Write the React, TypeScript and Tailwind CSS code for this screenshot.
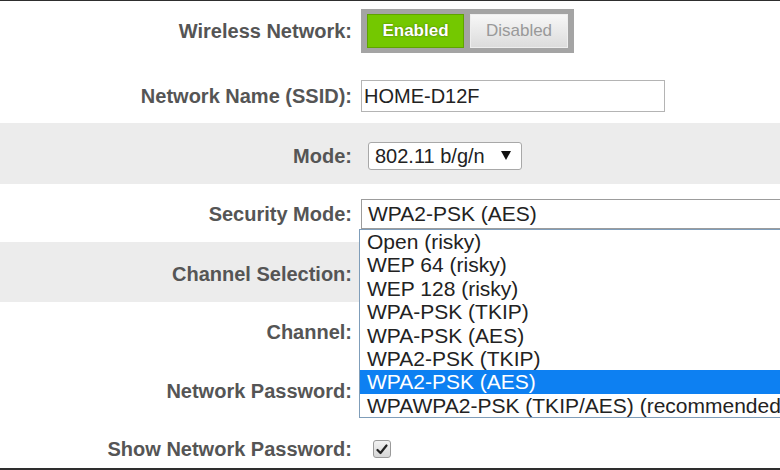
const labelCls =
  "w-[352px] shrink-0 text-right text-[20px] font-bold text-[#555] leading-none";

const securityOptions = [
  "Open (risky)",
  "WEP 64 (risky)",
  "WEP 128 (risky)",
  "WPA-PSK (TKIP)",
  "WPA-PSK (AES)",
  "WPA2-PSK (TKIP)",
  "WPA2-PSK (AES)",
  "WPAWPA2-PSK (TKIP/AES) (recommended)",
];

function Row({
  label,
  shaded = false,
  className = "",
  children,
}: {
  label: string;
  shaded?: boolean;
  className?: string;
  children?: React.ReactNode;
}) {
  return (
    <div
      className={`flex items-center ${shaded ? "bg-[#ececec]" : ""} ${className}`}
    >
      <div className={labelCls}>{label}</div>
      <div className="ml-[9px] flex items-center">{children}</div>
    </div>
  );
}

/** Enabled / Disabled toggle pair */
function Toggle() {
  return (
    <div className="flex gap-[6px] bg-[#a4a4a4] px-[6px] py-[5px] w-[213px] h-[44px]">
      <div className="w-[97px] h-[34px] flex items-center justify-center bg-[#74c800] border border-[#5fa300] text-white text-[17px] font-bold [text-shadow:0_0_2px_rgba(60,90,0,0.9)]">
        Enabled
      </div>
      <div className="w-[98px] h-[34px] flex items-center justify-center bg-gradient-to-b from-[#f7f7f7] to-[#dcdcdc] border border-[#eeeeee] text-[#999] text-[17px]">
        Disabled
      </div>
    </div>
  );
}

function CheckBox() {
  return (
    <div className="ml-[12px] w-[18px] h-[18px] rounded-[3px] border border-[#9a9a9a] bg-gradient-to-b from-[#f2f2f2] to-[#d6d6d6] flex items-center justify-center">
      <svg width="12" height="11" viewBox="0 0 12 11">
        <path
          d="M1.5 6 L4.5 9 L10.5 1.5"
          fill="none"
          stroke="#222"
          strokeWidth="2.2"
          strokeLinecap="round"
          strokeLinejoin="round"
        />
      </svg>
    </div>
  );
}

export default function App() {
  return (
    <div
      className="w-[780px] h-[470px] overflow-hidden bg-white border-t border-b-2 border-[#2e2e2e] flex flex-col"
      style={{ fontFamily: '"Liberation Sans", Arial, sans-serif' }}
    >
      <Row label="Wireless Network:" className="h-[58px] pt-[1px]">
        <Toggle />
      </Row>

      <Row label="Network Name (SSID):" className="h-[64px] pt-[10px]">
        <div className="w-[304px] h-[32px] border border-[#b4b4b4] flex items-center pl-[2px] text-[20px] text-[#222]">
          HOME-D12F
        </div>
      </Row>

      <Row label="Mode:" shaded className="h-[61px] pt-[4px]">
        <div className="ml-[7px] w-[154px] h-[28px] border border-[#a8a8a8] rounded-[3px] bg-white flex items-center pl-[6px] text-[20px] text-[#222]">
          <span>802.11 b/g/n</span>
          <svg className="ml-[16px]" width="10" height="9" viewBox="0 0 10 9">
            <path d="M0 0 H10 L5 9 Z" fill="#111" />
          </svg>
        </div>
      </Row>

      <Row label="Security Mode:" className="h-[58px] pt-[2px] relative z-10">
        <div className="relative">
          <div className="w-[440px] h-[30px] border border-[#9c9c9c] bg-white flex items-center pl-[6px] text-[21px] text-[#222]">
            WPA2-PSK (AES)
          </div>
          {/* open dropdown list */}
          <div className="absolute left-[-2px] top-[30px] w-[450px] border border-[#7f9db9] bg-white">
            {securityOptions.map((o) => (
              <div
                key={o}
                className={`h-[23.4px] flex items-center pl-[7px] text-[21px] whitespace-nowrap ${
                  o === "WPA2-PSK (AES)"
                    ? "bg-[#0d80f2] text-white"
                    : "text-[#222]"
                }`}
              >
                {o}
              </div>
            ))}
          </div>
        </div>
      </Row>

      <Row label="Channel Selection:" shaded className="h-[60px] pt-[4px]" />
      <Row label="Channel:" className="h-[60px]" />
      <Row label="Network Password:" className="h-[58px]" />

      <Row label="Show Network Password:" className="h-[48px] pt-[10px]">
        <CheckBox />
      </Row>
    </div>
  );
}
